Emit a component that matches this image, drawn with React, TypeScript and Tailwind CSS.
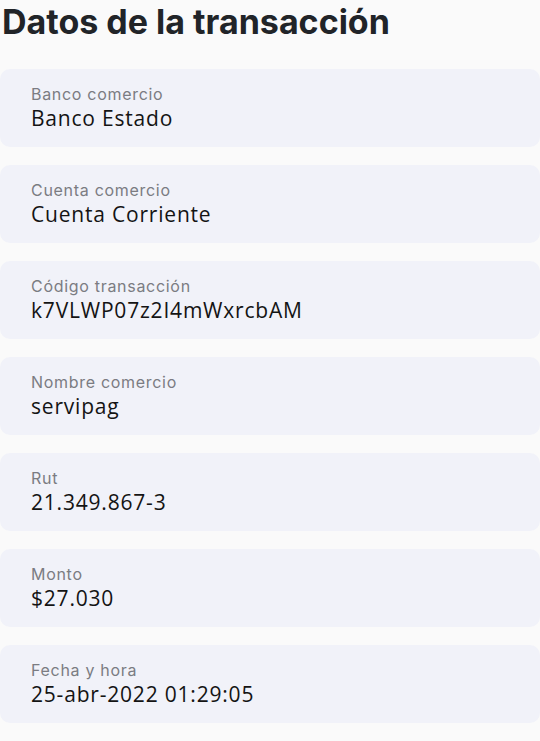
const rows = [
  { label: 'Banco comercio', value: 'Banco Estado' },
  { label: 'Cuenta comercio', value: 'Cuenta Corriente' },
  { label: 'Código transacción', value: 'k7VLWP07z2I4mWxrcbAM' },
  { label: 'Nombre comercio', value: 'servipag' },
  { label: 'Rut', value: '21.349.867-3' },
  { label: 'Monto', value: '$27.030' },
  { label: 'Fecha y hora', value: '25-abr-2022 01:29:05' },
];

export default function App() {
  return (
    <div className="min-h-[741px] w-[540px] bg-[#fafafa] font-['Inter',sans-serif]">
      <h1 className="pl-[2px] text-[34px] font-bold leading-[44px] text-[#212428]">
        Datos de la transacción
      </h1>
      <div className="mt-[25px] flex w-[540px] flex-col gap-[18px]">
        {rows.map((r) => (
          <div key={r.label} className="flex h-[78px] flex-col justify-center rounded-[10px] bg-[#f1f2f9] pl-[31px]">
            <span className="text-[16px] leading-[20px] tracking-[0.7px] text-[#7b7c82]">{r.label}</span>
            <span className="font-['Open_Sans',sans-serif] text-[21px] leading-[28px] tracking-[0.8px] text-[#141414]">
              {r.value}
            </span>
          </div>
        ))}
      </div>
    </div>
  );
}
